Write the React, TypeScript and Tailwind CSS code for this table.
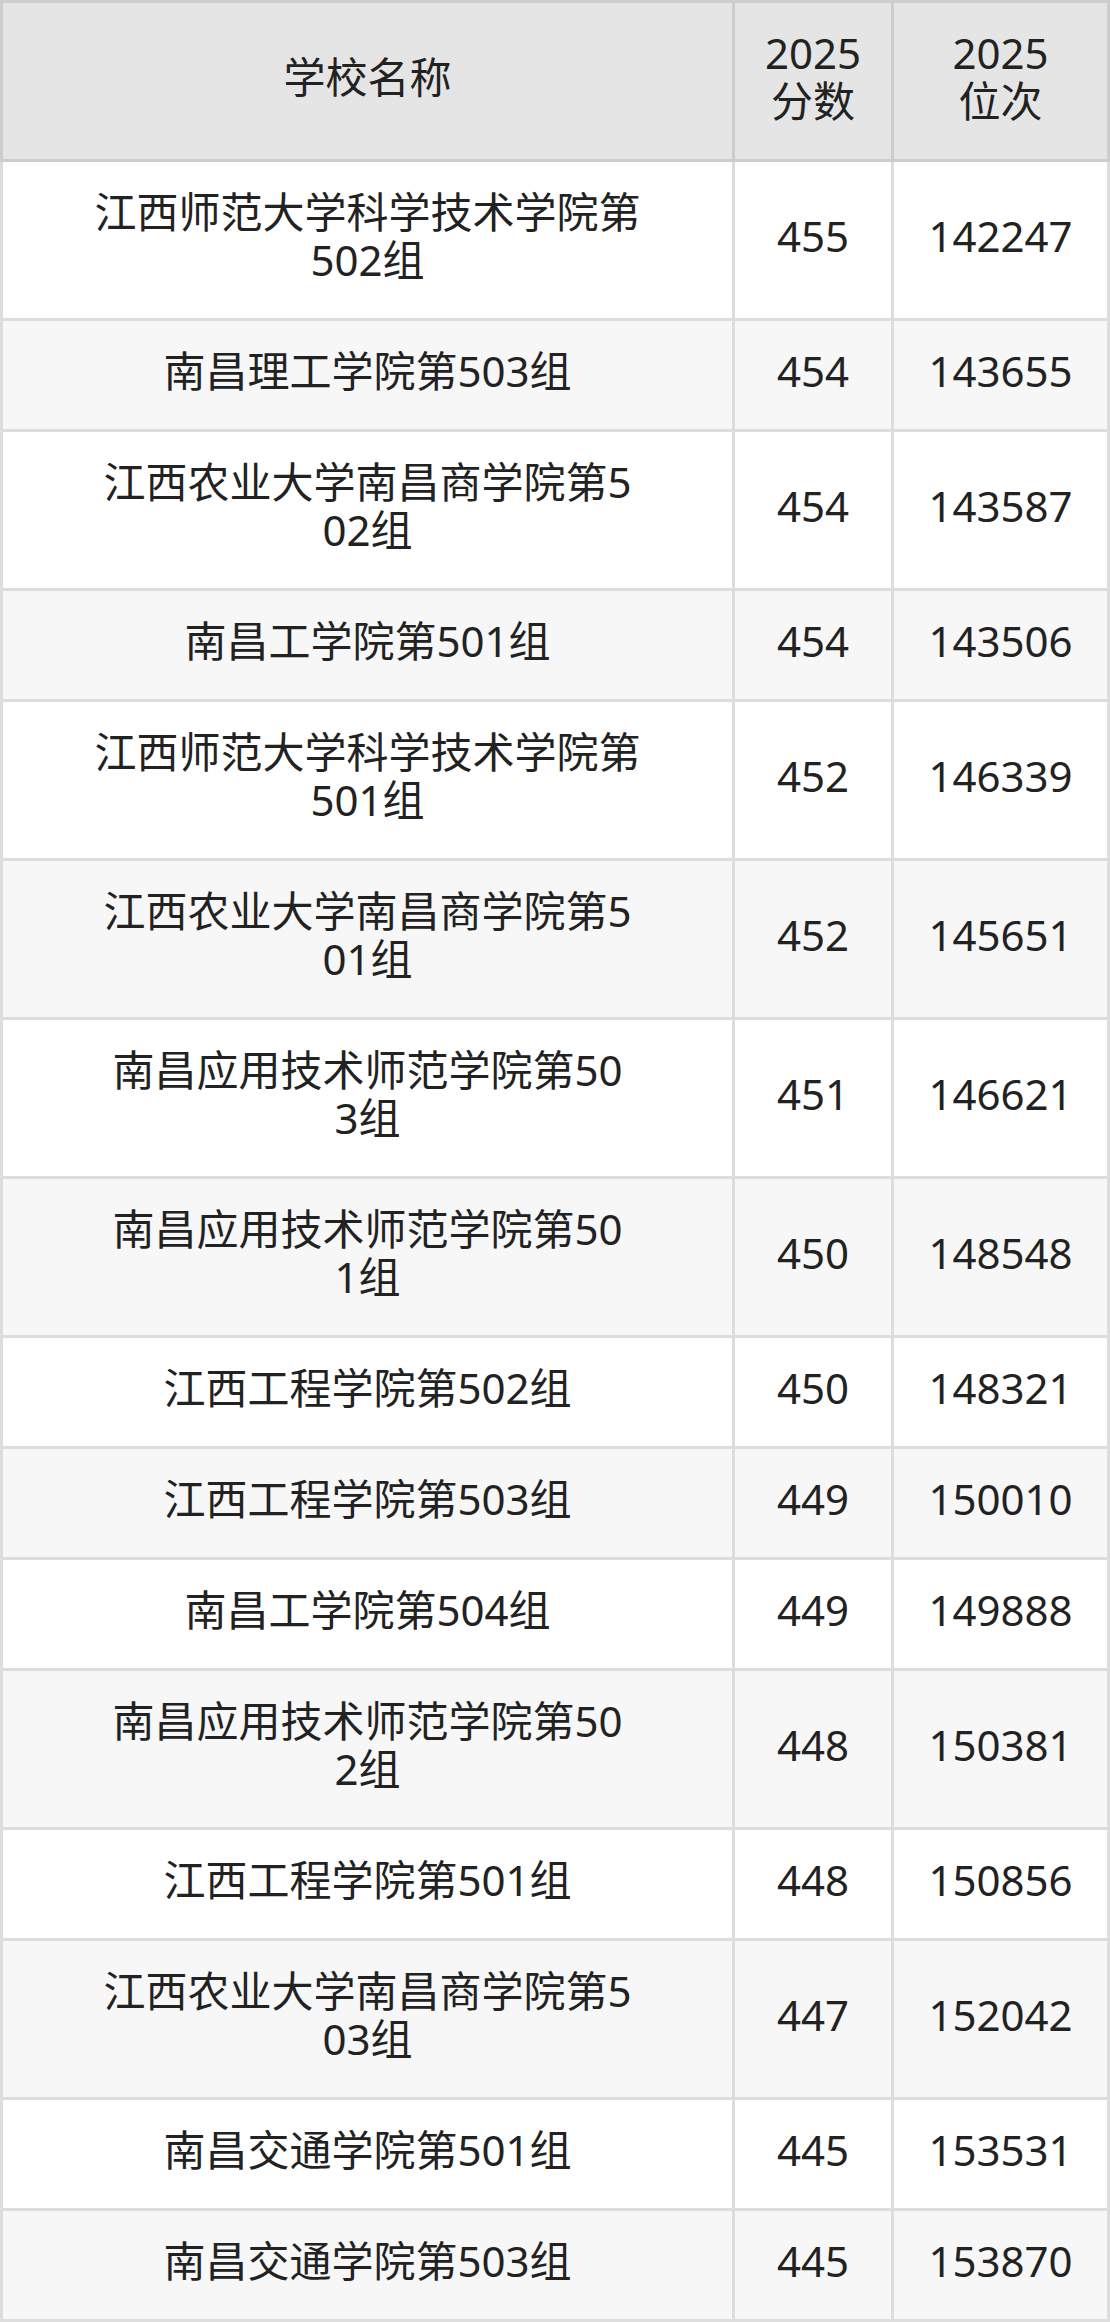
const rows = [
  { name: '江西师范大学科学技术学院第502组', score: '455', rank: '142247' },
  { name: '南昌理工学院第503组', score: '454', rank: '143655' },
  { name: '江西农业大学南昌商学院第502组', score: '454', rank: '143587' },
  { name: '南昌工学院第501组', score: '454', rank: '143506' },
  { name: '江西师范大学科学技术学院第501组', score: '452', rank: '146339' },
  { name: '江西农业大学南昌商学院第501组', score: '452', rank: '145651' },
  { name: '南昌应用技术师范学院第503组', score: '451', rank: '146621' },
  { name: '南昌应用技术师范学院第501组', score: '450', rank: '148548' },
  { name: '江西工程学院第502组', score: '450', rank: '148321' },
  { name: '江西工程学院第503组', score: '449', rank: '150010' },
  { name: '南昌工学院第504组', score: '449', rank: '149888' },
  { name: '南昌应用技术师范学院第502组', score: '448', rank: '150381' },
  { name: '江西工程学院第501组', score: '448', rank: '150856' },
  { name: '江西农业大学南昌商学院第503组', score: '447', rank: '152042' },
  { name: '南昌交通学院第501组', score: '445', rank: '153531' },
  { name: '南昌交通学院第503组', score: '445', rank: '153870' },
];

// names wrap every 13 characters in the source table
function splitName(name: string) {
  const chars = Array.from(name);
  const lines: string[] = [];
  for (let i = 0; i < chars.length; i += 13) {
    lines.push(chars.slice(i, i + 13).join(''));
  }
  return lines;
}

export default function App() {
  return (
    <div
      className="w-[1110px] bg-white text-[#222] text-[42px] leading-[48px]"
      style={{ fontFamily: '"Noto Sans", "Noto Sans CJK SC", sans-serif' }}
    >
      {/* Header */}
      <div className="flex border-[3px] border-[#cdcdcd] bg-[#e5e5e5]">
        <div className="w-[729px] flex items-center justify-center pt-[26px] pb-[34px]">
          学校名称
        </div>
        <div className="w-[159px] border-l-[3px] border-[#cdcdcd] flex flex-col items-center justify-center pt-[26px] pb-[34px]">
          <span>2025</span>
          <span>分数</span>
        </div>
        <div className="w-[216px] border-l-[3px] border-[#cdcdcd] flex flex-col items-center justify-center pt-[26px] pb-[34px]">
          <span>2025</span>
          <span>位次</span>
        </div>
      </div>

      {/* Body */}
      {rows.map((row, i) => (
        <div
          key={i}
          className={`flex border-x-[3px] border-b-[3px] border-[#dddddd] ${
            i % 2 === 1 ? 'bg-[#f7f7f7]' : 'bg-white'
          }`}
        >
          <div className="w-[729px] flex flex-col items-center justify-center pt-[26px] pb-[34px] text-center">
            {splitName(row.name).map((line, j) => (
              <span key={j}>{line}</span>
            ))}
          </div>
          <div className="w-[159px] border-l-[3px] border-[#dddddd] flex items-center justify-center pb-[8px]">
            {row.score}
          </div>
          <div className="w-[216px] border-l-[3px] border-[#dddddd] flex items-center justify-center pb-[8px]">
            {row.rank}
          </div>
        </div>
      ))}
    </div>
  );
}
